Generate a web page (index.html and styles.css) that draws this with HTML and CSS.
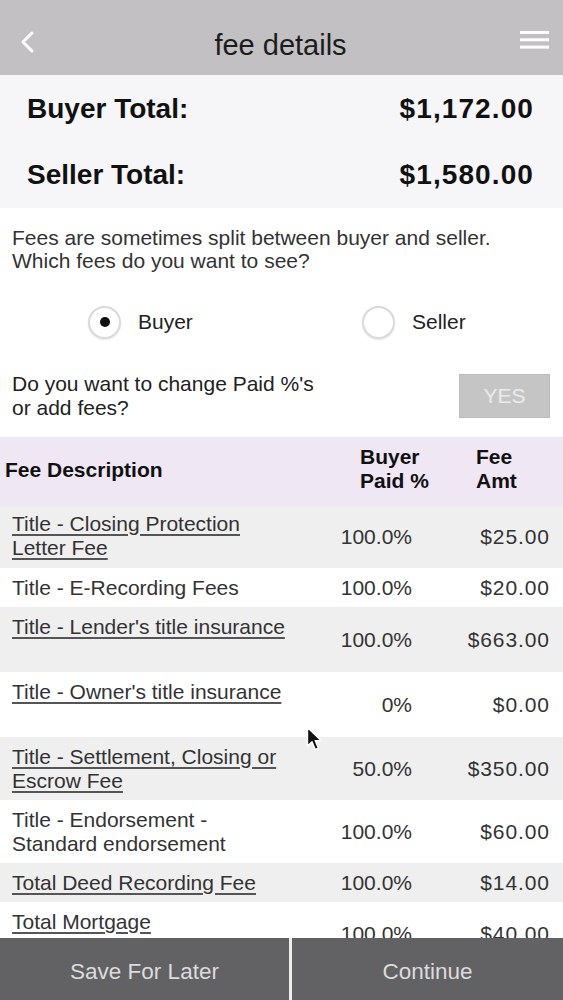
FILE: index.html
```html
<!DOCTYPE html>
<html lang="en">
<head>
<meta charset="utf-8">
<title>fee details</title>
<link rel="stylesheet" href="styles.css">
</head>
<body>
<header class="topbar">
  <button class="icon-btn back" aria-label="Back">
    <svg width="16" height="24" viewBox="0 0 16 24"><path d="M12 3 L3 12 L12 21" fill="none" stroke="#fff" stroke-width="3" stroke-linecap="round" stroke-linejoin="round"/></svg>
  </button>
  <h1 class="title">fee details</h1>
  <button class="icon-btn menu" aria-label="Menu">
    <svg width="30" height="18" viewBox="0 0 30 18"><rect x="0" y="0" width="29" height="3" fill="#fff"/><rect x="0" y="7.3" width="29" height="3" fill="#fff"/><rect x="0" y="14.6" width="29" height="3" fill="#fff"/></svg>
  </button>
</header>

<section class="totals">
  <div class="total-row first"><span>Buyer Total:</span><span class="total-amt">$1,172.00</span></div>
  <div class="total-row"><span>Seller Total:</span><span class="total-amt">$1,580.00</span></div>
</section>

<section class="filter">
  <p class="intro">Fees are sometimes split between buyer and seller.<br>Which fees do you want to see?</p>
  <div class="radios">
    <label class="radio"><span class="radio-circle checked"></span>Buyer</label>
    <label class="radio"><span class="radio-circle"></span>Seller</label>
  </div>
  <div class="question">
    <p>Do you want to change Paid %'s<br>or add fees?</p>
    <button class="yes">YES</button>
  </div>
</section>

<div class="fee-table">
  <div class="fee-head">
    <span class="head-desc">Fee Description</span>
    <span class="head-pct">Buyer<br>Paid %</span>
    <span class="head-amt">Fee<br>Amt</span>
  </div>
  <div class="fee-row gray r62">
    <span class="desc link">Title - Closing Protection Letter Fee</span>
    <span class="pct">100.0%</span><span class="amt">$25.00</span>
  </div>
  <div class="fee-row">
    <span class="desc">Title - E-Recording Fees</span>
    <span class="pct">100.0%</span><span class="amt">$20.00</span>
  </div>
  <div class="fee-row gray tall">
    <span class="desc link">Title - Lender's title insurance</span>
    <span class="pct">100.0%</span><span class="amt">$663.00</span>
  </div>
  <div class="fee-row tall">
    <span class="desc link">Title - Owner's title insurance</span>
    <span class="pct">0%</span><span class="amt">$0.00</span>
  </div>
  <div class="fee-row gray">
    <span class="desc link">Title - Settlement, Closing or Escrow Fee</span>
    <span class="pct">50.0%</span><span class="amt">$350.00</span>
  </div>
  <div class="fee-row">
    <span class="desc">Title - Endorsement - Standard endorsement</span>
    <span class="pct">100.0%</span><span class="amt">$60.00</span>
  </div>
  <div class="fee-row gray">
    <span class="desc link">Total Deed Recording Fee</span>
    <span class="pct">100.0%</span><span class="amt">$14.00</span>
  </div>
  <div class="fee-row">
    <span class="desc link">Total Mortgage<br>Recording Fee</span>
    <span class="pct">100.0%</span><span class="amt">$40.00</span>
  </div>
</div>

<footer class="actions">
  <button class="action">Save For Later</button>
  <span class="divider"></span>
  <button class="action">Continue</button>
</footer>

<svg class="cursor" width="18" height="27" viewBox="0 0 18 27"><path d="M1.5 1.5 L1.5 20 L6 15.8 L9.2 23.5 L12.4 22.2 L9.2 14.6 L15 14.6 Z" fill="#111" stroke="#fff" stroke-width="1.4" stroke-linejoin="round"/></svg>
</body>
</html>
```

FILE: styles.css
```css
html, body {
  margin: 0;
  height: 1000px;
  overflow: hidden;
}
body {
  position: relative;
  width: 563px;
  background: #ffffff;
  font-family: "Liberation Sans", Arial, Helvetica, sans-serif;
  color: #222;
}

.topbar {
  height: 75px;
  box-sizing: border-box;
  padding: 15px 13px 0 20px;
  display: grid;
  grid-template-columns: 1fr auto 1fr;
  align-items: center;
  background: #c2c0c3;
}
.icon-btn {
  background: none;
  border: 0;
  padding: 0;
  display: flex;
}
.back { justify-self: start; margin-top: -6px; }
.menu { justify-self: end; margin-top: -10px; }
.title {
  margin: 0 9px 0 0;
  font-size: 29px;
  font-weight: normal;
  color: #1c1c1c;
}

.totals {
  background: #f6f5f8;
  padding: 0 30px 0 27px;
}
.total-row {
  height: 66px;
  display: flex;
  justify-content: space-between;
  align-items: center;
  font-weight: bold;
  font-size: 28px;
  color: #111;
}
.total-row.first { height: 67px; }
.total-amt { letter-spacing: 1.1px; margin-right: -1px; }

.filter {
  padding: 18px 13px 0 12px;
}
.intro {
  margin: 0;
  font-size: 21px;
  line-height: 23px;
  color: #333;
}
.radios {
  margin-top: 32px;
  height: 36px;
  display: grid;
  grid-template-columns: 274px auto;
  align-items: center;
  padding-left: 76px;
}
.radio {
  display: flex;
  align-items: center;
  gap: 17px;
  font-size: 21px;
  color: #222;
}
.radio-circle {
  width: 33px;
  height: 33px;
  box-sizing: border-box;
  border: 2px solid #d9d9d9;
  border-radius: 50%;
  display: flex;
  align-items: center;
  justify-content: center;
  box-shadow: 0 1px 2px rgba(0, 0, 0, 0.1);
}
.radio-circle.checked::after {
  content: "";
  width: 10px;
  height: 10px;
  border-radius: 50%;
  background: #111;
}
.question {
  margin-top: 32px;
  display: flex;
  justify-content: space-between;
  align-items: center;
}
.question p {
  margin: 0;
  font-size: 21px;
  line-height: 24px;
  color: #222;
}
.yes {
  width: 91px;
  height: 44px;
  background: #c5c5c5;
  border: 1px solid #bcbcbc;
  color: #ececec;
  font-family: inherit;
  font-size: 21px;
  padding: 0;
}

.fee-table {
  margin-top: 17px;
}
.fee-head,
.fee-row {
  display: grid;
  grid-template-columns: 282px 118px 137px;
  padding: 0 14px 0 12px;
  align-items: center;
  font-size: 21px;
  line-height: 24px;
}
.fee-head {
  height: 69px;
  background: #efe7f4;
  font-weight: bold;
  color: #111;
  white-space: nowrap;
}
.head-desc { margin-left: -7px; margin-top: -3px; }
.head-pct { padding-left: 66px; margin-top: -5px; }
.head-amt { padding-left: 64px; margin-top: -5px; }

.fee-row {
  color: #333;
  background: #ffffff;
}
.fee-row.gray { background: #efefef; }
.fee-row.tall { min-height: 65px; }
.fee-row .desc {
  align-self: start;
  padding: 8px 0 7px;
}
.fee-row.r62 .desc { padding: 6px 0 8px; }
.pct, .amt { text-align: right; }
.amt { letter-spacing: 0.9px; margin-right: -0.9px; }
.link {
  text-decoration: underline;
  text-decoration-color: #555;
  text-decoration-thickness: 1.5px;
  text-underline-offset: 3px;
}

.actions {
  position: fixed;
  left: 0;
  right: 0;
  bottom: 0;
  height: 62px;
  display: grid;
  grid-template-columns: 289px 3px 1fr;
  background: #626163;
}
.divider { background: #eeeeee; }
.action {
  background: none;
  border: 0;
  padding: 5px 0 0;
  color: #dcdcdc;
  font-family: inherit;
  font-size: 22.5px;
}

.cursor {
  position: absolute;
  left: 306px;
  top: 726px;
}
```
